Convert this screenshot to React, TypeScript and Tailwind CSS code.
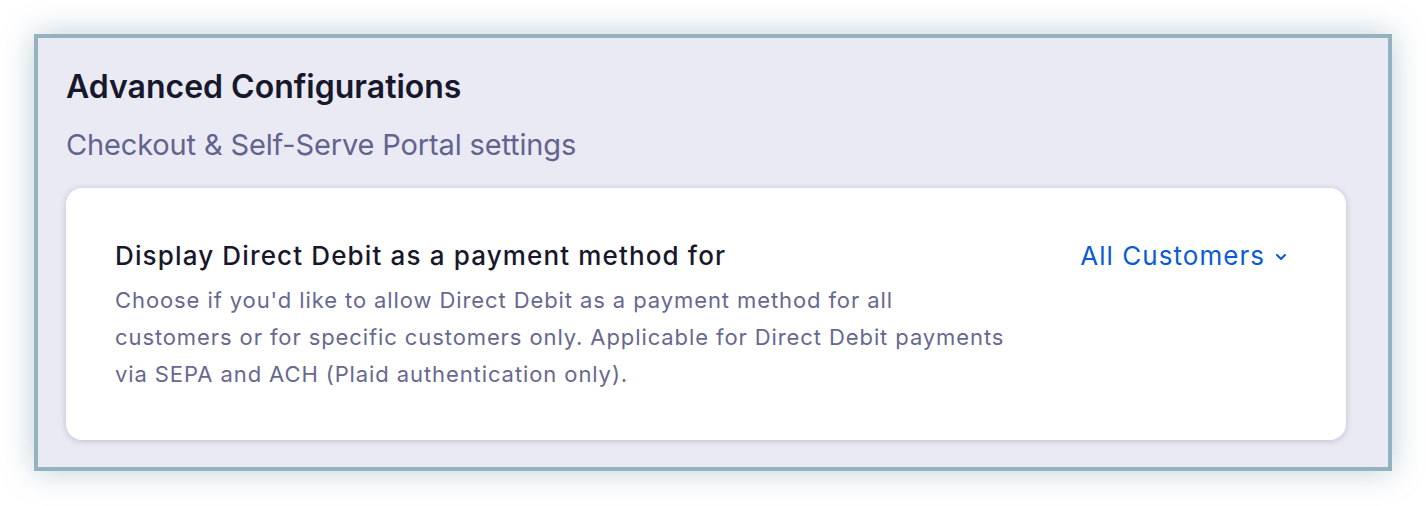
import React from 'react';

function ChevronDown(): JSX.Element {
	return (
		<svg width="14" height="10" viewBox="0 0 14 10" fill="none" className="ml-[9px] mt-[13px]">
			<path d="M3 3L7 7L11 3" stroke="currentColor" strokeWidth="2" strokeLinecap="round" strokeLinejoin="round" />
		</svg>
	);
}

export default function App(): JSX.Element {
	return (
		<div className="w-[1426px] h-[506px] bg-white pt-[34px] pl-[34px] font-['Inter',sans-serif]">
			<div className="w-[1358px] h-[437px] border-4 border-[#95b2c0] bg-[#eaeaf4] pt-[29px] pl-[28px] shadow-[0_0_30px_rgba(90,130,150,0.38)]">
				<h1 className="text-[32px] leading-[40px] font-semibold text-[#18182c]">Advanced Configurations</h1>
				<p className="mt-[20px] text-[29px] leading-[36px] text-[#63638f] tracking-[-0.005em]">Checkout &amp; Self-Serve Portal settings</p>
				<div className="mt-[25px] w-[1280px] h-[252px] bg-white rounded-2xl shadow-[0_1px_6px_rgba(60,60,110,0.25)] pl-[49px] pr-[58px] pt-[51px] flex justify-between">
					<div>
						<h2 className="text-[26px] leading-[34px] font-medium text-[#18182c] tracking-[0.044em]">Display Direct Debit as a payment method for</h2>
						<p className="mt-[9px] text-[22px] leading-[37px] text-[#68688f] tracking-[0.041em]">
							Choose if you'd like to allow Direct Debit as a payment method for all
							<br />
							customers or for specific customers only. Applicable for Direct Debit payments
							<br />
							via SEPA and ACH (Plaid authentication only).
						</p>
					</div>
					<button type="button" className="flex items-start h-fit text-[26px] leading-[34px] text-[#0b5bd6] tracking-[0.04em]">
						All Customers
						<ChevronDown />
					</button>
				</div>
			</div>
		</div>
	);
}
